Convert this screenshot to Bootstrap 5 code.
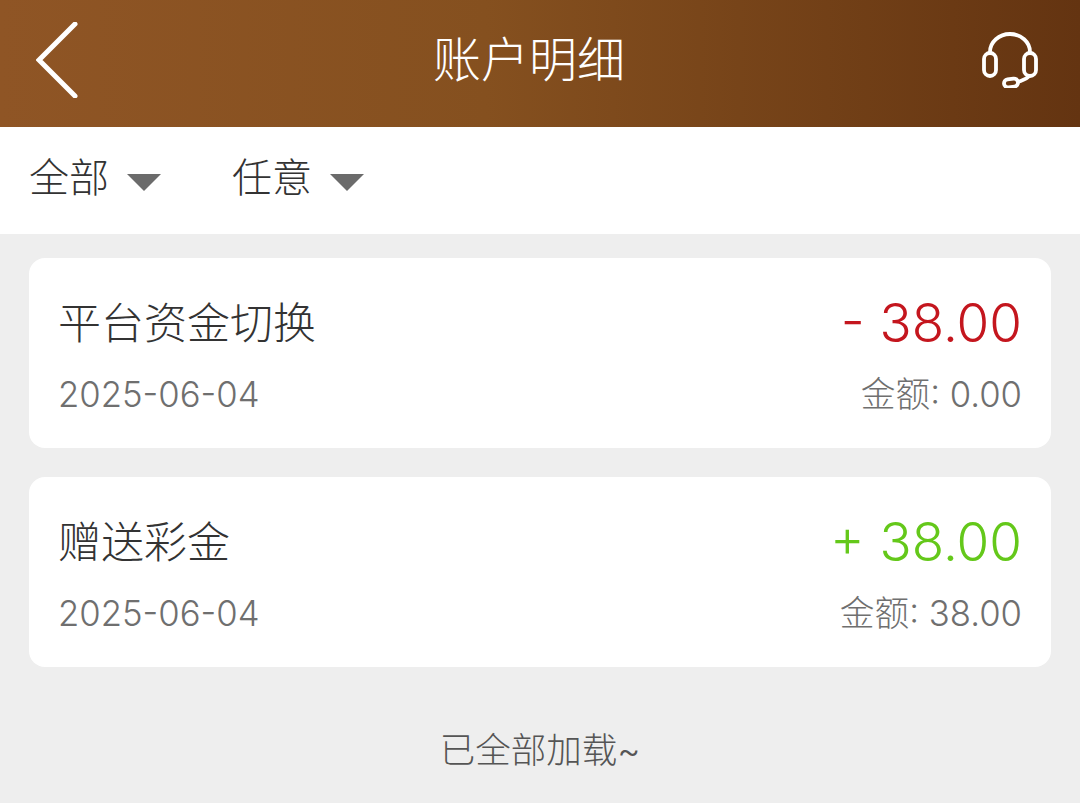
<!DOCTYPE html>
<html lang="zh-CN">
<head>
    <meta charset="UTF-8">
    <meta name="viewport" content="width=device-width, initial-scale=1.0">
    <title>账户明细</title>
    <link href="https://cdn.jsdelivr.net/npm/bootstrap@5.3.0/dist/css/bootstrap.min.css" rel="stylesheet">
    <style>
        body { background: #eeeeee; font-family: Inter, "Noto Sans CJK SC", sans-serif; font-weight: 300; overflow: hidden; }
        .app-header { height: 127px; padding: 0 42px 7px 36px; background: linear-gradient(90deg, #8f5525 0%, #85501f 45%, #643411 100%); }
        .app-title { font-size: 48px; font-weight: 300; color: #fff; line-height: 1; padding-right: 2px; }
        .filter-bar { height: 107px; padding-left: 29px; gap: 71px; }
        .filter-item { font-size: 40px; color: #333; line-height: 1; gap: 18px; padding-bottom: 6px; }
        .filter-caret { width: 0; height: 0; border-left: 17px solid transparent; border-right: 17px solid transparent; border-top: 17px solid #6b6b6b; margin-top: 10px; }
        .records { padding: 24px 29px 0; gap: 29px; }
        .record { height: 190px; border-radius: 16px; padding: 3px 29px 0; background: #fff; gap: 27px; }
        .record-title { font-size: 43px; color: #333; line-height: 1; }
        .record-amt { font-size: 53px; line-height: 1; }
        .record-date { font-size: 34.7px; color: #6f6f6f; line-height: 1; }
        .record-bal { font-size: 34.7px; color: #6f6f6f; line-height: 1; }
        .amt-out { color: #c4161e; }
        .amt-in { color: #64c81a; }
        .load-end { font-size: 35.5px; color: #555; line-height: 1; padding-top: 66px; }
    </style>
</head>
<body>
    <header class="app-header d-flex align-items-center justify-content-between">
        <svg width="42" height="76" viewBox="0 0 42 76" fill="none" stroke="#fff" stroke-width="5" stroke-linecap="round" stroke-linejoin="miter"><path d="M39 2 L3 38 L39 74"/></svg>
        <div class="app-title">账户明细</div>
        <svg width="56" height="56" viewBox="0 0 56 56" fill="none" stroke="#fff" stroke-width="3.8"><path d="M8 22 V20 a20 18 0 0 1 40 0 V22"/><rect x="2" y="21" width="12" height="23" rx="6"/><rect x="42" y="21" width="12" height="23" rx="6"/><path d="M47 44 C45 47 41 48 36 50"/><rect x="22" y="47" width="14" height="8" rx="4" transform="rotate(-8 29 51)"/></svg>
    </header>

    <div class="filter-bar d-flex align-items-center bg-white">
        <div class="filter-item d-flex align-items-center"><span>全部</span><i class="filter-caret"></i></div>
        <div class="filter-item d-flex align-items-center"><span>任意</span><i class="filter-caret"></i></div>
    </div>

    <div class="records d-flex flex-column">
        <div class="record d-flex flex-column justify-content-center">
            <div class="d-flex justify-content-between align-items-center">
                <span class="record-title">平台资金切换</span>
                <span class="record-amt amt-out">- 38.00</span>
            </div>
            <div class="d-flex justify-content-between align-items-center">
                <span class="record-date">2025-06-04</span>
                <span class="record-bal">金额: 0.00</span>
            </div>
        </div>
        <div class="record d-flex flex-column justify-content-center">
            <div class="d-flex justify-content-between align-items-center">
                <span class="record-title">赠送彩金</span>
                <span class="record-amt amt-in">+ 38.00</span>
            </div>
            <div class="d-flex justify-content-between align-items-center">
                <span class="record-date">2025-06-04</span>
                <span class="record-bal">金额: 38.00</span>
            </div>
        </div>
    </div>

    <div class="load-end text-center">已全部加载~</div>

    <script src="https://cdn.jsdelivr.net/npm/bootstrap@5.3.0/dist/js/bootstrap.bundle.min.js"></script>
</body>
</html>
